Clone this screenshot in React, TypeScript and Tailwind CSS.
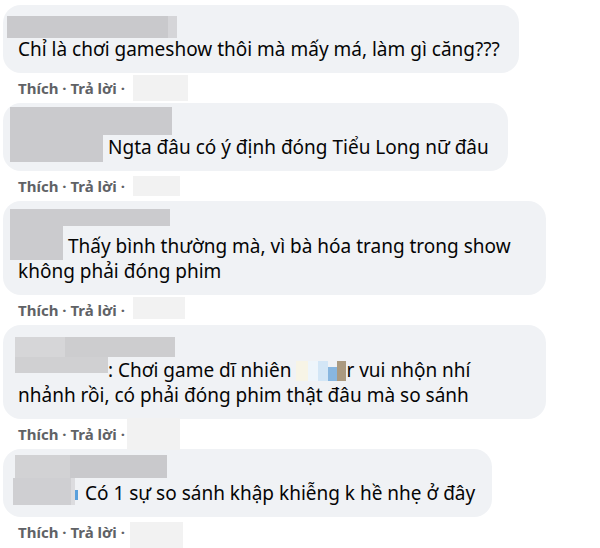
import type { ReactNode } from 'react'

function Actions({ box }: { box: string }) {
  return (
    <div className="relative flex h-[30px] items-center pl-[15px]">
      <span className="text-[15px] font-bold text-[#606266]">Thích · Trả lời ·</span>
      <div className={box} />
    </div>
  )
}

function Bubble({ width, children }: { width: string; children: ReactNode }) {
  return (
    <div className={`${width} rounded-[18px] bg-[#f0f2f5] pb-[11px] pl-[15px] pr-3 pt-[11px]`}>
      {children}
    </div>
  )
}

export default function App() {
  return (
    <div className="min-h-[548px] w-[600px] overflow-hidden bg-white pl-[3px] pt-[5px] font-['Noto_Sans','Open_Sans',sans-serif] text-[19px] leading-[25px] text-[#050505]">
      {/* 1 */}
      <Bubble width="w-[516px]">
        <div className="flex h-[21px] items-start">
          <div className="-ml-[11px] flex h-[22px] w-[170px] shrink-0">
            <div className="h-full w-[161px] bg-[#c9c9cc]" />
            <div className="h-full w-[9px] bg-[#d5d5d8]" />
          </div>
        </div>
        <p>Chỉ là chơi gameshow thôi mà mấy má, làm gì căng???</p>
      </Bubble>
      <Actions box="absolute left-[130px] top-[2px] h-[26px] w-[55px] bg-[#f2f2f2]" />

      {/* 2 */}
      <Bubble width="w-[505px]">
        <div className="flex h-[21px] items-start">
          <div className="-ml-[8px] -mt-[7px] h-[28px] w-[162px] shrink-0 bg-[#cacacd]" />
        </div>
        <p>
          <span className="float-left -mb-[2px] -ml-[8px] mr-[5px] h-[27px] w-[93px] bg-[#cacacd]" />
          Ngta đâu có ý định đóng Tiểu Long nữ đâu
        </p>
      </Bubble>
      <Actions box="absolute left-[130px] top-[5px] h-[20px] w-[47px] bg-[#f2f2f2]" />

      {/* 3 */}
      <Bubble width="w-[543px]">
        <div className="flex h-[22px] items-start">
          <div className="-ml-[8px] -mt-[3px] h-[17px] w-[160px] shrink-0 bg-[#cbcbce]" />
        </div>
        <p>
          <span className="float-left -mb-[9px] -ml-[8px] -mt-[8px] mr-[5px] h-[34px] w-[53px] bg-[#cbcbce]" />
          Thấy bình thường mà, vì bà hóa trang trong show
          <br />
          không phải đóng phim
        </p>
      </Bubble>
      <Actions box="absolute left-[130px] top-[2px] h-[22px] w-[52px] bg-[#f2f2f2]" />

      {/* 4 */}
      <Bubble width="w-[543px]">
        <div className="flex h-[22px] items-start">
          <div className="-ml-[3px] mt-[1px] flex h-[20px] w-[160px] shrink-0">
            <div className="h-full w-[50px] bg-[#d6d6d8]" />
            <div className="h-full w-[110px] bg-[#cdcdcf]" />
          </div>
        </div>
        <p>
          <span className="float-left -ml-[3px] -mt-[1px] h-[16px] w-[93px] bg-[#d0d0d2]" />
          : Chơi game dĩ nhiên{' '}
          <span className="inline-flex h-[20px] w-[50px] align-[-4px]">
            <span className="h-full w-[12px] bg-[#f7f4e6]" />
            <span className="h-full w-[10px] bg-[#eef5fb]" />
            <span className="h-full w-[10px] bg-[#d3e6f6]" />
            <span className="mt-[6px] h-[14px] w-[9px] bg-[#88b6df]" />
            <span className="h-full w-[9px] bg-[#ab9a80]" />
          </span>
          r vui nhộn nhí
          <br />
          nhảnh rồi, có phải đóng phim thật đâu mà so sánh
        </p>
      </Bubble>
      <Actions box="absolute -top-[1px] left-[124px] h-[32px] w-[53px] bg-[#f2f2f2]" />

      {/* 5 */}
      <Bubble width="w-[489px]">
        <div className="flex h-[21px] items-start">
          <div className="-ml-[3px] -mt-[5px] flex h-[23px] w-[152px] shrink-0">
            <div className="h-full w-[55px] bg-[#d2d2d4]" />
            <div className="h-full w-[97px] bg-[#c9c9cc]" />
          </div>
        </div>
        <p>
          <span className="float-left -mb-[2px] -ml-[5px] -mt-[3px] mr-[5px] flex h-[27px] w-[67px]">
            <span className="h-full w-[58px] bg-[#cfcfd2]" />
            <span className="h-full w-[4px] bg-[#dcdcdf]" />
            <span className="mt-[12px] h-[10px] w-[3px] bg-[#5aa0dc]" />
          </span>
          Có 1 sự so sánh khập khiễng k hề nhẹ ở đây
        </p>
      </Bubble>
      <Actions box="absolute left-[127px] top-[5px] h-[26px] w-[53px] bg-[#f2f2f2]" />
    </div>
  )
}
